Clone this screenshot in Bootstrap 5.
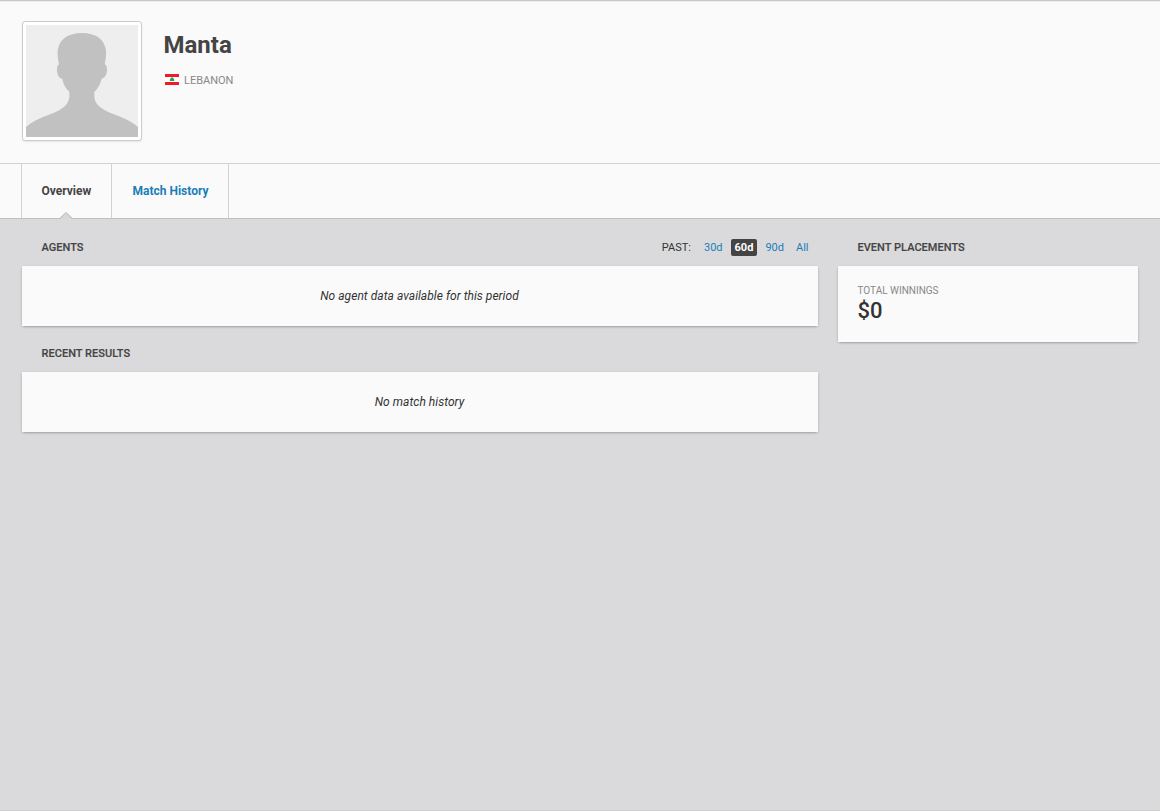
<!DOCTYPE html>
<html lang="en">
<head>
<meta charset="utf-8">
<meta name="viewport" content="width=device-width, initial-scale=1">
<title>Manta - Player Profile</title>
<link href="https://cdn.jsdelivr.net/npm/bootstrap@5.3.0/dist/css/bootstrap.min.css" rel="stylesheet">
<style>
body{font-family:Roboto,Arial,sans-serif;font-size:12px;line-height:20px;color:#333;background:#dadadc;min-height:100vh;border-bottom:1px solid #cfcfd0}
a{text-decoration:none;color:#1a7eb8}
.profile-top{background:#fafafa;border-top:1px solid #c8c8c8;box-shadow:inset 0 1px 0 #ececec;height:163px;padding:20px 22px 0}
.avatar{width:120px;height:120px;background:#fff;border:1px solid #ccc;border-radius:3px;padding:3px;box-shadow:0 1px 2px rgba(0,0,0,.08)}
.avatar svg,.flag{display:block}
.name-block{margin-left:21.5px}
.player-name{font-size:24px;line-height:28px;font-weight:700;color:#444;margin:10px 0 0}
.country{font-size:11px;line-height:14px;color:#888;margin-top:15px;padding-left:1.5px}
.flag{margin:-3px 5px 0 0}
.profile-tabs{background:#fafafa;border-top:1px solid #d3d3d3;border-bottom:1px solid #bfbfbf;height:56px;padding-left:21px}
.tab{font-weight:700;border-left:1px solid #d3d3d3;padding:0 0 0 20.5px;height:54px;line-height:55px}
.tab:last-child{border-right:1px solid #d3d3d3;width:118px}
.tab.active{color:#444;width:90px;padding-left:19.5px}
.tab-arrow{position:absolute;left:37px;bottom:-1px;display:block}
.content{padding:18px 22px 0;gap:20px}
.side{width:300px}
.section-title{font-size:11px;line-height:20px;font-weight:500;color:#444;margin:0;padding:1px 0 0 19.5px;letter-spacing:.03px;-webkit-text-stroke:.15px #444}
.section-head{height:29px}
.panel{background:#fafafa;box-shadow:0 1px 3px -1px rgba(0,0,0,.5)}
.panel-empty{height:60px;line-height:60px;margin-bottom:17px;padding-right:1px;letter-spacing:.04px}
.range{font-size:11px;line-height:17px;padding-right:5.5px;margin-top:2px;gap:4px}
.range span{margin-right:5px}
.range a{padding:0 4px}
.range a.chosen{background:#444;color:#fff;border-radius:2px;font-weight:700}
.winnings{height:76px;padding:18px 19.5px 0}
.winnings-label{font-size:10px;line-height:14px;color:#888}
.winnings-sum{font-size:22px;line-height:25px;font-weight:500;color:#333}
</style>
</head>
<body>
<header class="profile-top d-flex">
  <div class="avatar flex-shrink-0">
    <svg width="112" height="112" viewBox="48 75 336 336" aria-hidden="true">
      <path fill="#eee" d="M48 75h336v336H48z"/>
      <path fill="#c1c1c1" d="M48 411V381C72 359 104 350 137 336C168 322 178 306 178 288V275C168 266 159 252 157 236C146 235 141 222 141 209C141 200 143 195 147 193C144 180 142 165 143 152C147 118 175 99 216 99C257 99 284 118 288 152C289 165 287 180 284 193C289 195 291 200 291 209C291 222 286 233 275 236C272 252 263 266 253 276V288C253 306 264 322 295 336C328 350 360 359 384 381V411Z"/>
    </svg>
  </div>
  <div class="name-block">
    <h1 class="player-name">Manta</h1>
    <div class="country d-flex align-items-center">
      <svg class="flag" width="14" height="11" viewBox="0 0 14 11" aria-hidden="true"><path fill="#fff" d="M0 0h14v11H0z"/><path fill="#ee1c25" d="M0 0h14v3H0zM0 8h14v3H0z"/><path fill="#25a35a" d="M7 3.1l1.4 1.1.9 1.5v1.4H4.9V5.7l.9-1.5z"/></svg>
      <span>LEBANON</span>
    </div>
  </div>
</header>
<nav class="profile-tabs d-flex">
  <a class="tab active position-relative text-nowrap" href="#">Overview
    <svg class="tab-arrow" width="14" height="7" viewBox="0 0 14 7" aria-hidden="true"><path d="M0 7L7 .5L14 7" fill="#d6d6d8" stroke="#b8b8b8"/></svg>
  </a>
  <a class="tab text-nowrap" href="#">Match History</a>
</nav>
<main class="content d-flex">
  <div class="flex-grow-1">
    <div class="section-head d-flex justify-content-between align-items-start">
      <h2 class="section-title">AGENTS</h2>
      <div class="range d-flex"><span>PAST:</span><a href="#">30d</a><a class="chosen" href="#">60d</a><a href="#">90d</a><a href="#">All</a></div>
    </div>
    <div class="panel panel-empty text-center fst-italic">No agent data available for this period</div>
    <div class="section-head"><h2 class="section-title">RECENT RESULTS</h2></div>
    <div class="panel panel-empty text-center fst-italic">No match history</div>
  </div>
  <aside class="side flex-shrink-0">
    <div class="section-head"><h2 class="section-title">EVENT PLACEMENTS</h2></div>
    <div class="panel winnings"><div class="winnings-label">TOTAL WINNINGS</div><div class="winnings-sum">$0</div></div>
  </aside>
</main>
<script src="https://cdn.jsdelivr.net/npm/bootstrap@5.3.0/dist/js/bootstrap.bundle.min.js"></script>
</body>
</html>
